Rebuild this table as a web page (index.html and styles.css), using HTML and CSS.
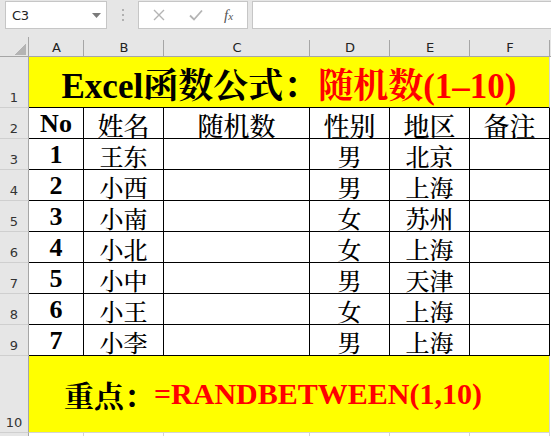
FILE: index.html
```html
<!DOCTYPE html>
<html lang="zh-CN">
<head>
<meta charset="utf-8">
<title>Excel</title>
<link rel="stylesheet" href="styles.css">
</head>
<body>
<div class="toolbar">
  <div class="namebox">
    <span class="ref">C3</span>
    <svg class="dd" width="9" height="5" viewBox="0 0 9 5"><path d="M0 0H9L4.5 5Z" fill="#7a7a7a"/></svg>
  </div>
  <div class="dots"><i></i><i></i><i></i></div>
  <div class="fbtns">
    <svg width="12" height="12" viewBox="0 0 12 12"><path d="M1 1L11 11M11 1L1 11" stroke="#b4b4b4" stroke-width="1.4" fill="none"/></svg>
    <svg width="14" height="12" viewBox="0 0 14 12"><path d="M1 6.5L5 10.5L13 1.5" stroke="#b4b4b4" stroke-width="1.8" fill="none"/></svg>
    <span class="fx">f<small>x</small></span>
  </div>
  <div class="finput"></div>
</div>

<div class="sheet">
  <div class="corner"></div>
  <div class="ch">A</div><div class="ch">B</div><div class="ch">C</div><div class="ch">D</div><div class="ch">E</div><div class="ch">F</div><div class="ch end"></div>

  <div class="rh">1</div>
  <div class="title">Excel函数公式：<span class="red">随机数(1–10)</span></div>
  <div class="pad"></div>

  <div class="rh">2</div>
  <div class="c n">No</div><div class="c hd">姓名</div><div class="c hd">随机数</div><div class="c hd">性别</div><div class="c hd">地区</div><div class="c hd">备注</div><div class="pad"></div>

  <div class="rh">3</div>
  <div class="c n">1</div><div class="c">王东</div><div class="c"></div><div class="c">男</div><div class="c">北京</div><div class="c"></div><div class="pad"></div>
  <div class="rh">4</div>
  <div class="c n">2</div><div class="c">小西</div><div class="c"></div><div class="c">男</div><div class="c">上海</div><div class="c"></div><div class="pad"></div>
  <div class="rh">5</div>
  <div class="c n">3</div><div class="c">小南</div><div class="c"></div><div class="c">女</div><div class="c">苏州</div><div class="c"></div><div class="pad"></div>
  <div class="rh">6</div>
  <div class="c n">4</div><div class="c">小北</div><div class="c"></div><div class="c">女</div><div class="c">上海</div><div class="c"></div><div class="pad"></div>
  <div class="rh">7</div>
  <div class="c n">5</div><div class="c">小中</div><div class="c"></div><div class="c">男</div><div class="c">天津</div><div class="c"></div><div class="pad"></div>
  <div class="rh">8</div>
  <div class="c n">6</div><div class="c">小王</div><div class="c"></div><div class="c">女</div><div class="c">上海</div><div class="c"></div><div class="pad"></div>
  <div class="rh">9</div>
  <div class="c n">7</div><div class="c">小李</div><div class="c"></div><div class="c">男</div><div class="c">上海</div><div class="c"></div><div class="pad"></div>

  <div class="rh">10</div>
  <div class="note">重点：<span class="red">=RANDBETWEEN(1,10)</span></div>
  <div class="pad"></div>

  <div class="rh last"></div>
  <div class="g"></div><div class="g"></div><div class="g"></div><div class="g"></div><div class="g"></div><div class="g"></div><div class="pad"></div>
</div>
</body>
</html>
```

FILE: styles.css
```css
* { box-sizing: border-box; }
html, body { margin: 0; padding: 0; background: #fff; overflow: hidden; }
body { width: 551px; height: 436px; font-family: "Liberation Sans", Arial, sans-serif; }

.toolbar {
  height: 37px;
  background: #e6e6e6;
  display: flex;
  align-items: flex-start;
  padding: 1px 0 0 5px;
}
.namebox {
  width: 102px;
  height: 28px;
  background: #fff;
  border: 1px solid #c6c6c6;
  display: flex;
  align-items: center;
  justify-content: space-between;
  padding: 0 5px 0 6px;
}
.ref { font-size: 13px; color: #222; font-family: "DejaVu Sans", sans-serif; letter-spacing: -0.3px; }
.dd { margin-top: 1px; }
.dots {
  width: 31px;
  height: 28px;
  display: flex;
  flex-direction: column;
  align-items: center;
  justify-content: center;
  gap: 3px;
}
.dots i { display: block; width: 2px; height: 2px; background: #b0b0b0; }
.fbtns {
  width: 110px;
  height: 28px;
  background: #fff;
  border: 1px solid #c6c6c6;
  display: flex;
  align-items: center;
  padding: 0 0 0 14px;
  gap: 24px;
}
.fx {
  font-family: "Liberation Serif", serif;
  font-style: italic;
  font-size: 15px;
  color: #555;
  margin-left: -3px;
}
.fx small { font-size: 11px; }
.finput {
  flex: 1;
  height: 28px;
  margin-left: 4px;
  background: #fff;
  border: 1px solid #c6c6c6;
  border-right: none;
}

.sheet {
  display: grid;
  grid-template-columns: 29px 55px 80px 146px 80px 80px 80px 1px;
  grid-template-rows: 20px 51px repeat(8, 31px) 77px 4px;
  font-family: "Liberation Serif", "Noto Serif CJK SC", "Noto Sans CJK SC", serif;
}
.corner {
  background:
    linear-gradient(135deg, transparent 50%, #b4b4b4 50%) 14px 7px / 12px 11px no-repeat,
    #e6e6e6;
  border-right: 1px solid #a6a6a6;
  border-bottom: 1px solid #a6a6a6;
}
.ch {
  background:
    linear-gradient(#a6a6a6, #a6a6a6) right 3px / 1px calc(100% - 3px) no-repeat,
    #e6e6e6;
  border-bottom: 1px solid #a6a6a6;
  font-family: "DejaVu Sans", sans-serif;
  font-size: 13px;
  color: #222;
  display: flex;
  align-items: flex-end;
  justify-content: center;
  padding-bottom: 1px;
}
.ch.end { background: #e6e6e6; }
.rh {
  background: #e6e6e6;
  border-right: 1px solid #a6a6a6;
  border-bottom: 1px solid #cfcfcf;
  font-family: "DejaVu Sans", sans-serif;
  font-size: 13px;
  color: #333;
  display: flex;
  align-items: flex-end;
  justify-content: center;
  padding-bottom: 2px;
}
.rh.last { border-bottom: none; }
.pad { background: #fff; }

.title {
  grid-column: span 6;
  background: #ffff00;
  border-bottom: 1px solid #000;
  border-right: 1px solid #d4d4d4;
  display: flex;
  align-items: center;
  justify-content: center;
  font-size: 35px;
  font-weight: bold;
  color: #000;
  padding-top: 2px;
}
.red { color: #ff0000; }

.c {
  border-right: 1px solid #000;
  border-bottom: 1px solid #000;
  display: flex;
  align-items: center;
  justify-content: center;
  font-size: 24px;
  font-weight: 500;
  color: #000;
  padding-top: 2px;
}
.c.hd { font-size: 26px; }
.c.n { font-weight: bold; font-size: 26px; }

.note {
  grid-column: span 6;
  background: #ffff00;
  border-bottom: 1px solid #d4d4d4;
  border-right: 1px solid #d4d4d4;
  display: flex;
  align-items: center;
  justify-content: center;
  font-size: 30px;
  font-weight: bold;
  color: #000;
  padding-right: 32px;
}
.g { border-right: 1px solid #d4d4d4; }
```
